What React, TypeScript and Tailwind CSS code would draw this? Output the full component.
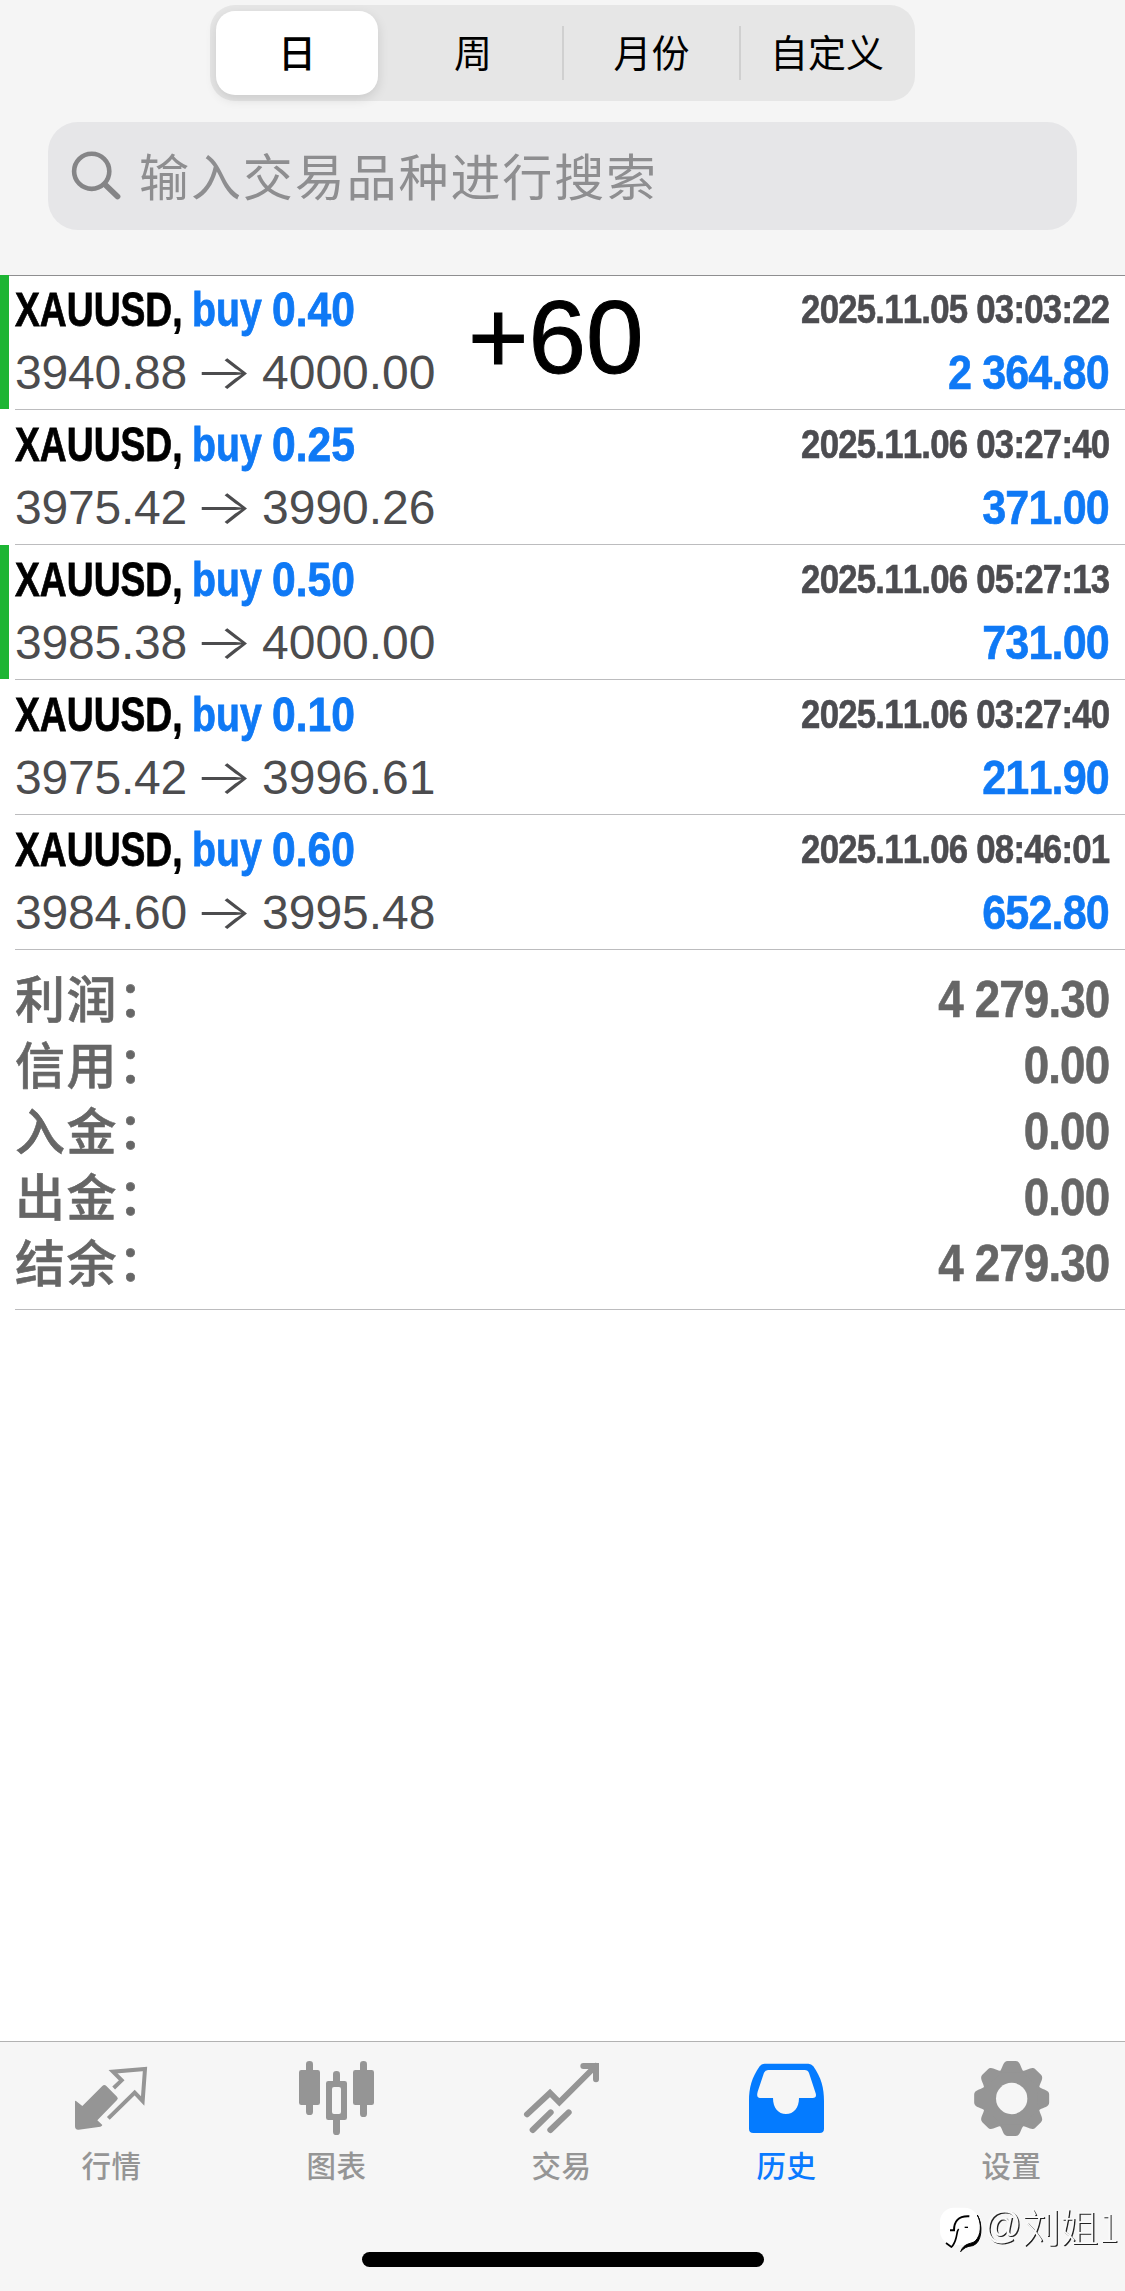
import type { ReactNode } from "react";

const LATIN = "font-['Liberation_Sans',Arial,sans-serif]";
const CJK = "font-['Noto_Sans_CJK_SC',sans-serif]";

interface Deal {
  volume: string;
  open: string;
  close: string;
  time: string;
  profit: string;
  marked?: boolean;
}

const deals: Deal[] = [
  { volume: "0.40", open: "3940.88", close: "4000.00", time: "2025.11.05 03:03:22", profit: "2 364.80", marked: true },
  { volume: "0.25", open: "3975.42", close: "3990.26", time: "2025.11.06 03:27:40", profit: "371.00" },
  { volume: "0.50", open: "3985.38", close: "4000.00", time: "2025.11.06 05:27:13", profit: "731.00", marked: true },
  { volume: "0.10", open: "3975.42", close: "3996.61", time: "2025.11.06 03:27:40", profit: "211.90" },
  { volume: "0.60", open: "3984.60", close: "3995.48", time: "2025.11.06 08:46:01", profit: "652.80" },
];

const totals = [
  { label: "利润", value: "4 279.30" },
  { label: "信用", value: "0.00" },
  { label: "入金", value: "0.00" },
  { label: "出金", value: "0.00" },
  { label: "结余", value: "4 279.30" },
];

function Segments() {
  return (
    <div className="mx-auto flex h-24 w-[705px] items-center rounded-[25px] bg-[#e6e6e6] text-[38px] leading-none text-black">
      <div className="ml-1.5 flex h-[84px] w-[162px] items-center justify-center rounded-[19px] bg-white pb-1 font-medium shadow-[0_4px_12px_rgba(0,0,0,0.12)]">
        日
      </div>
      <div className="flex h-full w-[184px] items-center justify-center pb-1 pl-1.5">周</div>
      <div className="h-[54px] w-0.5 shrink-0 bg-[#d0d0d0]" />
      <div className="flex h-full w-[175px] items-center justify-center pb-1">月份</div>
      <div className="h-[54px] w-0.5 shrink-0 bg-[#d0d0d0]" />
      <div className="flex h-full flex-1 items-center justify-center pb-1 pr-0.5">自定义</div>
    </div>
  );
}

function SearchBar() {
  return (
    <div className="mx-12 mt-[21px] flex h-[108px] items-center rounded-[30px] bg-[#e6e6e8] pl-[23px] text-[#8e8e90]">
      <svg width="50" height="50" viewBox="0 0 50 50" fill="none" stroke="#858587" strokeLinecap="round">
        <circle cx="20.7" cy="20.3" r="17.6" strokeWidth="4.6" />
        <path d="M34 33.5 46.5 45.5" strokeWidth="5.8" />
      </svg>
      <span className="mb-[5px] ml-[18px] text-[50px] leading-none tracking-[1.9px]">输入交易品种进行搜索</span>
    </div>
  );
}

function DealRow({ deal }: { deal: Deal }) {
  return (
    <div className="flex h-[135px]">
      <div className={`w-[9px] shrink-0 ${deal.marked ? "mb-px bg-[#1db534]" : ""}`} />
      <div className="ml-1.5 flex flex-1 justify-between border-b border-[#bcbcbe] pr-4 pt-2.5">
        <div>
          <div className="flex h-12 items-center whitespace-nowrap text-[49px] font-bold leading-none [-webkit-text-stroke:0.8px_currentColor]">
            <span className="w-[177px] origin-left scale-x-[0.76] text-black">XAUUSD,</span>
            <span className="w-20 origin-left scale-x-[0.8] text-[#0f79f5]">buy</span>
            <span className="origin-left scale-x-[0.87] text-[#0f79f5]">{deal.volume}</span>
          </div>
          <div className="mt-[15px] flex h-[50px] items-center whitespace-nowrap text-5xl leading-none text-[#4c4c4e]">
            <span className="w-[186px] tracking-[-0.2px]">{deal.open}</span>
            <span className="-ml-[7px] mb-0.5 w-[68px] origin-left scale-x-[1.29] font-['Inter',sans-serif] font-light">→</span>
            <span>{deal.close}</span>
          </div>
        </div>
        <div className="flex flex-col items-end whitespace-nowrap font-bold leading-none [font-kerning:none] [-webkit-text-stroke:0.6px_currentColor]">
          <div className="flex h-12 items-center text-[40px]">
            <span className="origin-right scale-x-[0.87] tracking-[-0.9px] text-[#4c4c50]">{deal.time}</span>
          </div>
          <div className="mt-3.5 flex h-[50px] items-center text-[49px]">
            <span className="origin-right scale-x-[0.88] tracking-[-1px] text-[#0f79f5]">{deal.profit}</span>
          </div>
        </div>
      </div>
    </div>
  );
}

function Totals() {
  return (
    <div className="ml-[15px] border-b border-[#bcbcbe] pb-[14px] pr-4 pt-[15px] text-[#666]">
      {totals.map((t) => (
        <div key={t.label} className="flex h-[66px] items-center justify-between">
          <span
            className={`mb-1 flex items-center ${CJK} text-[50px] font-medium leading-none tracking-[1.5px] [-webkit-text-stroke:0.6px_currentColor]`}
          >
            {t.label}
            <span className="relative -top-px">：</span>
          </span>
          <span className="mt-0.5 origin-right scale-x-[0.88] text-[52px] font-bold leading-none tracking-[-1px] [-webkit-text-stroke:0.6px_currentColor]">
            {t.value}
          </span>
        </div>
      ))}
    </div>
  );
}

function Tab({ label, viewBox, active, children }: { label: string; viewBox: string; active?: boolean; children: ReactNode }) {
  return (
    <div className={`flex w-[225px] flex-col items-center ${active ? "text-[#0a7aff]" : "text-[#959595]"}`}>
      <svg width="80" height="80" viewBox={viewBox} fill="currentColor" stroke="none">
        {children}
      </svg>
      <span className="mr-[2px] mt-[11px] text-[29.5px] font-medium leading-[30px] tracking-[0.5px]">{label}</span>
    </div>
  );
}

function TabBar() {
  return (
    <div className={`flex border-t border-[#b2b2b2] pt-4 ${CJK}`}>
      <Tab label="行情" viewBox="99 84 240 240">
        <path
          d="M108 213 127 228 187 168Q193 162 199 168L231 200Q236 205 231 210L172 271 187 285Q186 289 181 290L116 299Q105 300 105 289V216Q105 210 108 213Z"
        />
        <path
          d="M221 174 245 151 219 125 315 117 308 213 284 188 205 265"
          fill="none"
          stroke="currentColor"
          strokeWidth="12"
        />
      </Tab>
      <Tab label="图表" viewBox="774 84 240 240">
        <rect x="798" y="93" width="21" height="162" rx="10" />
        <rect x="777" y="120" width="63" height="105" rx="7" />
        <rect x="960" y="93" width="21" height="168" rx="10" />
        <rect x="939" y="120" width="63" height="105" rx="7" />
        <rect x="879" y="123" width="21" height="40" rx="10" />
        <rect x="879" y="260" width="21" height="55" rx="10" />
        <path
          fillRule="evenodd"
          d="M865 153H914Q921 153 921 160V263Q921 270 914 270H865Q858 270 858 263V160Q858 153 865 153ZM882 171Q876 171 876 177V246Q876 252 882 252H897Q903 252 903 246V177Q903 171 897 171Z"
        />
      </Tab>
      <Tab label="交易" viewBox="129 84 240 240">
        <g fill="none" stroke="currentColor" strokeWidth="18" strokeLinecap="round">
          <path d="M141 253 210 189 238 217 347 108" />
          <path d="M310 108H348V148" />
          <path d="M158 300 212 247M211 300 266 247" />
        </g>
      </Tab>
      <Tab label="历史" viewBox="804 84 240 240" active>
        <path
          fillRule="evenodd"
          d="M854 101H985Q994 101 1000 109C1024 143 1032 175 1032 213V296Q1032 309 1019 309H820Q807 309 807 296V213C807 175 815 143 839 109Q845 101 854 101ZM864 120Q856 120 852 128L833 185Q828 204 840 204H879C879 234 895 252 918 252S957 234 957 204H998Q1011 204 1007 190L987 129Q984 120 974 120Z"
          fill="#047bff"
        />
      </Tab>
      <Tab label="设置" viewBox="219 84 240 240">
        <mask id="gear-hole">
          <rect x="217" y="84" width="241" height="241" fill="white" />
          <circle cx="335" cy="205.5" r="47" fill="black" />
        </mask>
        <g mask="url(#gear-hole)">
          <circle cx="335" cy="205.5" r="87" />
          {[0, 45, 90, 135, 180, 225, 270, 315].map((angle) => (
            <path
              key={angle}
              transform={`rotate(${angle} 335 205.5)`}
              d="M296 127C306 121 307 103 315 96Q318 93 323 93H347Q352 93 355 96C363 103 364 121 374 127Z"
            />
          ))}
        </g>
      </Tab>
    </div>
  );
}

function Watermark() {
  return (
    <div className="absolute left-[940px] top-[2205px] flex items-start whitespace-nowrap">
      <svg width="44" height="54" viewBox="0 0 132 162">
        <rect x="0" y="8" width="116" height="112" rx="42" fill="white" />
        <path
          d="M112 30C126 56 124 90 106 108C96 118 72 112 62 140Q74 124 98 122C126 114 130 60 112 30Z"
          fill="black"
          stroke="black"
          strokeWidth="3"
        />
        <path d="M30 76H42C42 50 54 32 88 34" fill="none" stroke="black" strokeWidth="6" />
        <path d="M56 72C50 78 52 90 46 106Q40 122 34 126L18 114" fill="none" stroke="black" strokeWidth="5" />
        <path d="M74 67H84" stroke="black" strokeWidth="4" />
      </svg>
      <span
        className={`-mt-1 flex items-center ${CJK} text-[39px] font-light leading-[48px] text-[#fafafa] [text-shadow:1.2px_1.2px_0_#222]`}
      >
        <span className={`w-[38px] origin-left scale-x-[0.95] font-normal ${LATIN}`}>@</span>
        <span className="origin-left scale-x-[0.98]">刘姐1</span>
      </span>
    </div>
  );
}

export default function App() {
  return (
    <div className={`relative flex h-[2291px] w-[1125px] flex-col overflow-hidden bg-white ${LATIN}`}>
      <header className={`h-[276px] border-b border-[#8e8e90] bg-[#f5f5f5] pt-[5px] ${CJK}`}>
        <Segments />
        <SearchBar />
      </header>
      <main className="relative -mt-px flex-1">
        {deals.map((deal, i) => (
          <DealRow key={i} deal={deal} />
        ))}
        <Totals />
        <span className="absolute left-[468px] top-[11px] text-[103.5px] leading-none text-black [-webkit-text-stroke:1px_currentColor]">
          +60
        </span>
      </main>
      <footer className="flex h-[250px] flex-col bg-[#f6f6f6]">
        <TabBar />
        <div className="mx-auto mb-6 mt-auto h-[15px] w-[402px] rounded-full bg-black" />
      </footer>
      <Watermark />
    </div>
  );
}
